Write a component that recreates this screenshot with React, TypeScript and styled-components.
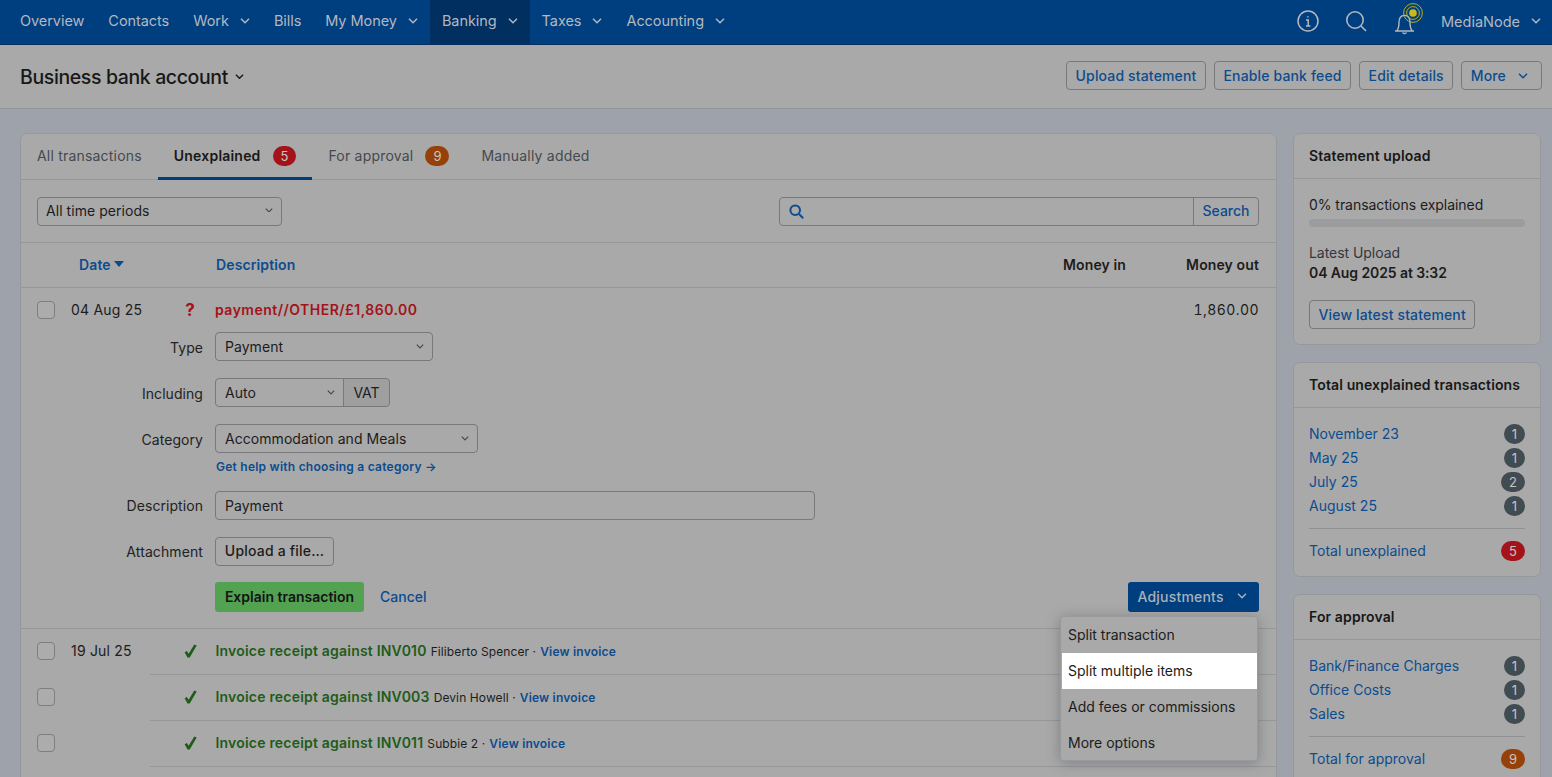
import React from "react";
import styled, { createGlobalStyle } from "styled-components";

const Global = createGlobalStyle`
  html, body { margin: 0; height: 100%; overflow: hidden; background: #9ea3ab; }
  body { font-family: Inter, "Noto Sans", sans-serif; font-size: 14px; color: #1c1c1c; }
  * { box-sizing: border-box; }
`;

const link = "#0c4c8e";
const line = "#969799";
const panel = "#a9a9a9";

const Page = styled.div`
  width: 1552px;
  height: 777px;
  overflow: hidden;
  background: #9ea3ab;
`;
const TopNav = styled.nav`
  height: 45px;
  background: #003f7f;
  border-bottom: 1px solid #033060;
  display: flex;
  align-items: stretch;
  padding-right: 11px;
  color: #b3b8bf;
`;
const NavItem = styled.div<{ $active?: boolean }>`
  display: flex;
  align-items: center;
  gap: 11px;
  padding: 0 12px 3px;
  background: ${(p) => (p.$active ? "#002f60" : "transparent")};
  letter-spacing: -0.06px;
  font-size: 14.5px;
  &:first-child { padding-left: 20px; }
`;
const NavRight = styled.div`
  margin-left: auto;
  display: flex;
  align-items: center;
  padding-bottom: 2px;
`;
const NavIcon = styled.svg`
  display: block;
  overflow: visible;
  margin-right: 26px;
`;
const UserName = styled.div`
  display: flex;
  align-items: center;
  gap: 11px;
  font-size: 14.5px;
  letter-spacing: 0;
  margin-left: -8px;
`;
const SubHeader = styled.header`
  height: 64px;
  background: ${panel};
  border-bottom: 1px solid #939598;
  display: flex;
  align-items: center;
  justify-content: space-between;
  padding: 0 10px 2px 20px;
`;
const Title = styled.h1`
  margin: 2px 0 0;
  font-size: 19.5px;
  font-weight: 500;
  letter-spacing: -0.38px;
  color: #181818;
  display: flex;
  align-items: center;
  gap: 7px;
`;
const Actions = styled.div`
  display: flex;
  gap: 8px;
`;
const OutlineButton = styled.button`
  height: 29px;
  padding: 0 8.5px;
  border: 1px solid #77797c;
  border-radius: 4px;
  background: ${panel};
  color: ${link};
  font: 500 14px Inter, sans-serif;
  letter-spacing: 0.15px;
  display: inline-flex;
  align-items: center;
  gap: 12px;
`;
const MoreButton = styled(OutlineButton)`
  padding-right: 13px;
`;
const Main = styled.main`
  display: grid;
  grid-template-columns: 1257px 248px;
  gap: 16px;
  padding: 24px 0 0 20px;
  align-items: start;
`;
const Card = styled.section`
  background: ${panel};
  border: 1px solid #96989c;
  border-radius: 7px;
`;
const MainCard = styled(Card)`
  height: 800px;
  position: relative;
`;
const Tabs = styled.div`
  display: flex;
  height: 46px;
  border-bottom: 1px solid ${line};
`;
const Tab = styled.div<{ $active?: boolean }>`
  display: flex;
  align-items: center;
  gap: 12px;
  padding: 0 16px;
  color: ${(p) => (p.$active ? "#181818" : "#44494f")};
  font-weight: ${(p) => (p.$active ? 600 : 400)};
  font-size: 14px;
  letter-spacing: 0.2px;
  border-bottom: 3px solid ${(p) => (p.$active ? "#003f7f" : "transparent")};
  margin-bottom: -1px;
`;
const Badge = styled.span<{ $tone: "red" | "amber" | "slate" }>`
  min-width: 21px;
  height: 20px;
  padding: 0 8px;
  border-radius: 10px;
  display: inline-flex;
  align-items: center;
  justify-content: center;
  font-size: 13px;
  font-weight: 400;
  letter-spacing: 0;
  color: #c5c5c5;
  background: ${(p) => (p.$tone === "red" ? "#a31319" : p.$tone === "amber" ? "#97410a" : "#414b52")};
`;
const FilterBar = styled.div`
  height: 63px;
  border-bottom: 1px solid ${line};
  display: flex;
  align-items: center;
  justify-content: space-between;
  padding: 0 17px 0 16px;
`;
const Select = styled.div<{ $w: number; $joined?: boolean }>`
  width: ${(p) => p.$w}px;
  height: 29px;
  border: 1px solid #77797c;
  border-radius: ${(p) => (p.$joined ? "4px 0 0 4px" : "4px")};
  padding: 0 8px 0 9px;
  display: flex;
  align-items: center;
  justify-content: space-between;
  letter-spacing: 0.05px;
  color: #1c1c1c;
  svg { color: #44494f; }
`;
const PeriodSelect = styled(Select)`
  padding: 0 8px 2px 8px;
`;
const SearchBox = styled.div`
  display: flex;
  height: 29px;
  width: 480px;
  border: 1px solid #77797c;
  border-radius: 4px;
`;
const SearchField = styled.div`
  flex: 1;
  padding-left: 9px;
  display: flex;
  align-items: center;
  border-right: 1px solid #77797c;
`;
const SearchLabel = styled.div`
  width: 64px;
  display: flex;
  align-items: center;
  justify-content: center;
  padding-bottom: 2px;
  color: ${link};
  font-weight: 500;
  letter-spacing: 0;
`;
const TableHead = styled.div`
  height: 45px;
  border-bottom: 1px solid ${line};
  display: grid;
  grid-template-columns: 58px 137px 1fr 110px 150px;
  align-items: center;
  padding-bottom: 2px;
  font-weight: 600;
  letter-spacing: 0.12px;
`;
const SortLink = styled.span<{ $col: number }>`
  color: ${link};
  display: inline-flex;
  align-items: center;
  gap: 3px;
  grid-column: ${(p) => p.$col};
`;
const Amount = styled.span`
  text-align: right;
  color: #1c1c1c;
`;
const AmountOut = styled(Amount)`
  padding-right: 17px;
`;
const TxRow = styled.div`
  height: 45px;
  display: grid;
  grid-template-columns: 34px 100px 38px 1fr 110px;
  align-items: center;
  padding: 0 0 2px 16px;
`;
const OpenRow = styled(TxRow)`
  padding: 0 17px 2px 16px;
`;
const CheckBox = styled.span`
  width: 18px;
  height: 18px;
  display: block;
  grid-column: 1;
  border: 1px solid #7c7e81;
  border-radius: 4px;
  background: #acacac;
`;
const DateText = styled.span`
  grid-column: 2;
  letter-spacing: 0.2px;
`;
const Status = styled.span`
  grid-column: 3;
  display: flex;
  justify-content: center;
`;
const Question = styled.span`
  color: #a31319;
  font-size: 17px;
  font-weight: 700;
`;
const Desc = styled.div`
  grid-column: 4;
  padding-left: 6px;
  display: flex;
  align-items: baseline;
  gap: 4px;
  font-size: 12px;
  letter-spacing: 0.1px;
  white-space: nowrap;
`;
const DescRed = styled.span`
  color: #a31319;
  font-size: 14px;
  font-weight: 600;
  letter-spacing: 0.48px;
`;
const DescGreen = styled.span`
  color: #1f5c1a;
  font-size: 14px;
  font-weight: 600;
  letter-spacing: 0.2px;
  margin-left: 0.5px;
`;
const SmallLink = styled.span`
  color: ${link};
  font-weight: 600;
  letter-spacing: 0.2px;
`;
const AmountCell = styled.span`
  grid-column: 5;
  text-align: right;
  font-variant-numeric: tabular-nums;
  letter-spacing: 0.45px;
`;
const Form = styled.div`
  display: grid;
  grid-template-columns: 182px 1fr;
  column-gap: 12px;
  row-gap: 17px;
  margin-top: -1px;
  align-items: center;
`;
const Label = styled.label<{ $gap?: boolean }>`
  text-align: right;
  letter-spacing: 0.06px;
  color: #222;
  padding-top: 2px;
  margin-top: ${(p) => (p.$gap ? "19px" : "0")};
`;
const AttachLabel = styled(Label)`
  padding-top: 0;
  letter-spacing: 0.1px;
`;
const Joined = styled.div`
  display: flex;
`;
const Addon = styled.div`
  width: 47px;
  height: 29px;
  margin-left: -1px;
  border: 1px solid #77797c;
  border-radius: 0 4px 4px 0;
  background: #9f9f9f;
  display: flex;
  align-items: center;
  justify-content: center;
`;
const FieldStack = styled.div`
  position: relative;
`;
const HelpLink = styled.a`
  position: absolute;
  left: 1px;
  top: 35px;
  color: ${link};
  font-size: 12px;
  font-weight: 600;
  letter-spacing: 0.24px;
  white-space: nowrap;
`;
const DescField = styled(Select)`
  margin-top: 21px;
`;
const UploadButton = styled.button`
  width: 119px;
  height: 29px;
  border: 1px solid #77797c;
  border-radius: 4px;
  background: ${panel};
  color: #1c1c1c;
  font: 500 14px Inter, sans-serif;
  letter-spacing: 0.2px;
  padding: 0 0 2px;
`;
const FormActions = styled.div`
  padding: 0 17px 16px 194px;
  height: 47px;
  display: flex;
  align-items: flex-start;
  gap: 16px;
  position: relative;
  border-bottom: 1px solid ${line};
  margin-top: 16px;
`;
const ExplainButton = styled.button`
  height: 30px;
  width: 149px;
  border: 0;
  border-radius: 3px;
  background: #52a251;
  color: #141414;
  font: 600 14px Inter, sans-serif;
  letter-spacing: 0;
  padding: 0 0 2px;
`;
const CancelLink = styled.a`
  color: ${link};
  font-weight: 500;
  line-height: 30px;
  letter-spacing: 0;
`;
const MenuAnchor = styled.div`
  margin-left: auto;
  position: relative;
`;
const PrimaryButton = styled.button`
  width: 131px;
  height: 30px;
  background: #003f7f;
  border: 0;
  border-radius: 3px;
  color: #a9b1ba;
  font: 500 14px Inter, sans-serif;
  letter-spacing: 0.2px;
  display: flex;
  align-items: center;
  justify-content: space-between;
  padding: 0 12px 2px 9.5px;
`;
const Menu = styled.div`
  position: absolute;
  right: 1px;
  top: 34px;
  z-index: 5;
  width: 198px;
  height: 145px;
  background: #a9a9a9;
  border: 1px solid #98999b;
  border-radius: 3px;
  padding: 0 0 0 1px;
  box-shadow: 0 2px 14px rgba(50, 55, 65, 0.35);
`;
const MenuItem = styled.div<{ $on?: boolean }>`
  height: 36px;
  display: flex;
  align-items: center;
  padding: 0 0 1px 6px;
  background: ${(p) => (p.$on ? "#ffffff" : "transparent")};
  color: #1c1c1c;
  letter-spacing: 0;
`;
const Divider = styled.div`
  height: 1px;
  background: ${line};
  margin-left: 129px;
`;
const Side = styled.aside`
  display: flex;
  flex-direction: column;
  gap: 17px;
`;
const SideHead = styled.h2`
  margin: 0;
  height: 45px;
  border-bottom: 1px solid ${line};
  padding: 0 15px 2px;
  display: flex;
  align-items: center;
  font-size: 14px;
  font-weight: 600;
  letter-spacing: 0.12px;
  color: #181818;
`;
const UploadBody = styled.div`
  height: 165px;
  padding: 16px 15px 0;
`;
const StatBody = styled.div`
  padding: 14px 15px 13px;
`;
const SmallText = styled.div`
  letter-spacing: -0.05px;
  line-height: 20px;
`;
const Track = styled.div`
  height: 8px;
  border-radius: 4px;
  background: #9b9c9e;
  margin: 4px 0 16px;
`;
const Muted = styled(SmallText)`
  color: #33373c;
`;
const Strong = styled.div`
  font-weight: 600;
  letter-spacing: -0.1px;
  line-height: 19px;
  margin-bottom: 18px;
`;
const StatRow = styled.div`
  height: 24px;
  display: flex;
  align-items: center;
  justify-content: space-between;
  color: ${link};
  letter-spacing: 0.02px;
`;
const StatLabel = styled.span`
  padding-bottom: 2px;
`;
const TotalRule = styled.div`
  height: 1px;
  background: #8f9194;
  margin: 10px 0;
`;

const Chevron = ({ size = 10 }: { size?: number }) => (
  <svg width={size} height={size * 0.6} viewBox="0 0 10 6" fill="none" stroke="currentColor" strokeWidth="1.5">
    <path d="M1 .8l4 4 4-4" />
  </svg>
);

const Check = () => (
  <svg width="13" height="14" viewBox="0 0 13 14">
    <path d="M.6 8.2l2.3-1.1 1.7 2.6L10.3.4l2.4 1L5.7 13.4H3.5z" fill="#1f5c1a" />
  </svg>
);

const nav: [string, boolean, boolean?][] = [
  ["Overview", false],
  ["Contacts", false],
  ["Work", true],
  ["Bills", false],
  ["My Money", true],
  ["Banking", true, true],
  ["Taxes", true],
  ["Accounting", true],
];

const StatGroup = ({ rows, total, tone }: { rows: [string, string][]; total: string; tone: [string, "red" | "amber"] }) => (
  <StatBody>
    {rows.map(([t, n]) => (
      <StatRow key={t}>
        <StatLabel>{t}</StatLabel>
        <Badge $tone="slate">{n}</Badge>
      </StatRow>
    ))}
    <TotalRule />
    <StatRow>
      <StatLabel>{total}</StatLabel>
      <Badge $tone={tone[1]}>{tone[0]}</Badge>
    </StatRow>
  </StatBody>
);

export default function App() {
  return (
    <Page>
      <Global />
      <TopNav>
        {nav.map(([t, c, a]) => (
          <NavItem key={t} $active={a}>
            {t}
            {c && <Chevron />}
          </NavItem>
        ))}
        <NavRight>
          <NavIcon width="22" height="22" viewBox="0 0 22 22" fill="none" stroke="#b3b8bf" strokeWidth="1.5">
            <circle cx="11" cy="11" r="10" />
            <path d="M9 10h2.2v6M9 16h4.4M10.9 6.2v1.2" />
          </NavIcon>
          <NavIcon width="22" height="22" viewBox="0 0 22 22" fill="none" stroke="#b3b8bf" strokeWidth="1.6">
            <circle cx="10" cy="10" r="8.2" />
            <path d="M16 16l5 5" />
          </NavIcon>
          <NavIcon width="30" height="30" viewBox="0 0 30 30" fill="none" stroke="#b3b8bf" strokeWidth="1.4">
            <path d="M2 25h19M4 24.6c1.6-2 2-4 2-8 0-4.4 2-7.2 5.5-7.2s5.5 2.8 5.5 7.2c0 4 .4 6 2 8M9.5 26.5c.8 1.3 3.2 1.3 4 0" />
            <circle cx="20" cy="7" r="3.8" fill="#c9b91a" stroke="none" />
            <circle cx="20" cy="7" r="6.4" stroke="#c9b91a" strokeWidth="0.9" />
            <circle cx="20" cy="7" r="9.4" stroke="#c9b91a" strokeWidth="0.9" />
          </NavIcon>
          <UserName>
            MediaNode
            <Chevron />
          </UserName>
        </NavRight>
      </TopNav>
      <SubHeader>
        <Title>
          Business bank account
          <Chevron size={9} />
        </Title>
        <Actions>
          <OutlineButton>Upload statement</OutlineButton>
          <OutlineButton>Enable bank feed</OutlineButton>
          <OutlineButton>Edit details</OutlineButton>
          <MoreButton>
            More
            <Chevron />
          </MoreButton>
        </Actions>
      </SubHeader>
      <Main>
        <MainCard>
          <Tabs>
            <Tab>All transactions</Tab>
            <Tab $active>
              Unexplained <Badge $tone="red">5</Badge>
            </Tab>
            <Tab>
              For approval <Badge $tone="amber">9</Badge>
            </Tab>
            <Tab>Manually added</Tab>
          </Tabs>
          <FilterBar>
            <PeriodSelect $w={245}>
              All time periods
              <Chevron size={8} />
            </PeriodSelect>
            <SearchBox>
              <SearchField>
                <svg width="15" height="15" viewBox="0 0 15 15" fill="none" stroke="#0c4c8e" strokeWidth="2">
                  <circle cx="6.2" cy="6.2" r="4.8" />
                  <path d="M10 10l4.2 4.2" />
                </svg>
              </SearchField>
              <SearchLabel>Search</SearchLabel>
            </SearchBox>
          </FilterBar>
          <TableHead>
            <SortLink $col={2}>
              Date
              <svg width="10" height="6" viewBox="0 0 10 6">
                <path d="M0 0h10L5 6z" fill="#0c4c8e" />
              </svg>
            </SortLink>
            <SortLink $col={3}>Description</SortLink>
            <Amount>Money in</Amount>
            <AmountOut>Money out</AmountOut>
          </TableHead>
          <OpenRow>
            <CheckBox />
            <DateText>04 Aug 25</DateText>
            <Status>
              <Question>?</Question>
            </Status>
            <Desc>
              <DescRed>payment//OTHER/£1,860.00</DescRed>
            </Desc>
            <AmountCell>1,860.00</AmountCell>
          </OpenRow>
          <Form>
            <Label>Type</Label>
            <Select $w={218}>
              Payment
              <Chevron size={8} />
            </Select>
            <Label>Including</Label>
            <Joined>
              <Select $w={129} $joined>
                Auto
                <Chevron size={8} />
              </Select>
              <Addon>VAT</Addon>
            </Joined>
            <Label>Category</Label>
            <FieldStack>
              <Select $w={263}>
                Accommodation and Meals
                <Chevron size={8} />
              </Select>
              <HelpLink>Get help with choosing a category →</HelpLink>
            </FieldStack>
            <Label $gap>Description</Label>
            <DescField $w={600}>Payment</DescField>
            <AttachLabel>Attachment</AttachLabel>
            <div>
              <UploadButton>Upload a file…</UploadButton>
            </div>
          </Form>
          <FormActions>
            <ExplainButton>Explain transaction</ExplainButton>
            <CancelLink>Cancel</CancelLink>
            <MenuAnchor>
              <PrimaryButton>
                Adjustments
                <Chevron />
              </PrimaryButton>
              <Menu>
                <MenuItem>Split transaction</MenuItem>
                <MenuItem $on>Split multiple items</MenuItem>
                <MenuItem>Add fees or commissions</MenuItem>
                <MenuItem>More options</MenuItem>
              </Menu>
            </MenuAnchor>
          </FormActions>
          <TxRow>
            <CheckBox />
            <DateText>19 Jul 25</DateText>
            <Status>
              <Check />
            </Status>
            <Desc>
              <DescGreen>Invoice receipt against INV010</DescGreen> Filiberto Spencer · <SmallLink>View invoice</SmallLink>
            </Desc>
          </TxRow>
          <Divider />
          <TxRow>
            <CheckBox />
            <Status>
              <Check />
            </Status>
            <Desc>
              <DescGreen>Invoice receipt against INV003</DescGreen> Devin Howell · <SmallLink>View invoice</SmallLink>
            </Desc>
          </TxRow>
          <Divider />
          <TxRow>
            <CheckBox />
            <Status>
              <Check />
            </Status>
            <Desc>
              <DescGreen>Invoice receipt against INV011</DescGreen> Subbie 2 · <SmallLink>View invoice</SmallLink>
            </Desc>
          </TxRow>
          <Divider />
        </MainCard>
        <Side>
          <Card>
            <SideHead>Statement upload</SideHead>
            <UploadBody>
              <SmallText>0% transactions explained</SmallText>
              <Track />
              <Muted>Latest Upload</Muted>
              <Strong>04 Aug 2025 at 3:32</Strong>
              <OutlineButton>View latest statement</OutlineButton>
            </UploadBody>
          </Card>
          <Card>
            <SideHead>Total unexplained transactions</SideHead>
            <StatGroup
              rows={[
                ["November 23", "1"],
                ["May 25", "1"],
                ["July 25", "2"],
                ["August 25", "1"],
              ]}
              total="Total unexplained"
              tone={["5", "red"]}
            />
          </Card>
          <Card>
            <SideHead>For approval</SideHead>
            <StatGroup
              rows={[
                ["Bank/Finance Charges", "1"],
                ["Office Costs", "1"],
                ["Sales", "1"],
              ]}
              total="Total for approval"
              tone={["9", "amber"]}
            />
          </Card>
        </Side>
      </Main>
    </Page>
  );
}
